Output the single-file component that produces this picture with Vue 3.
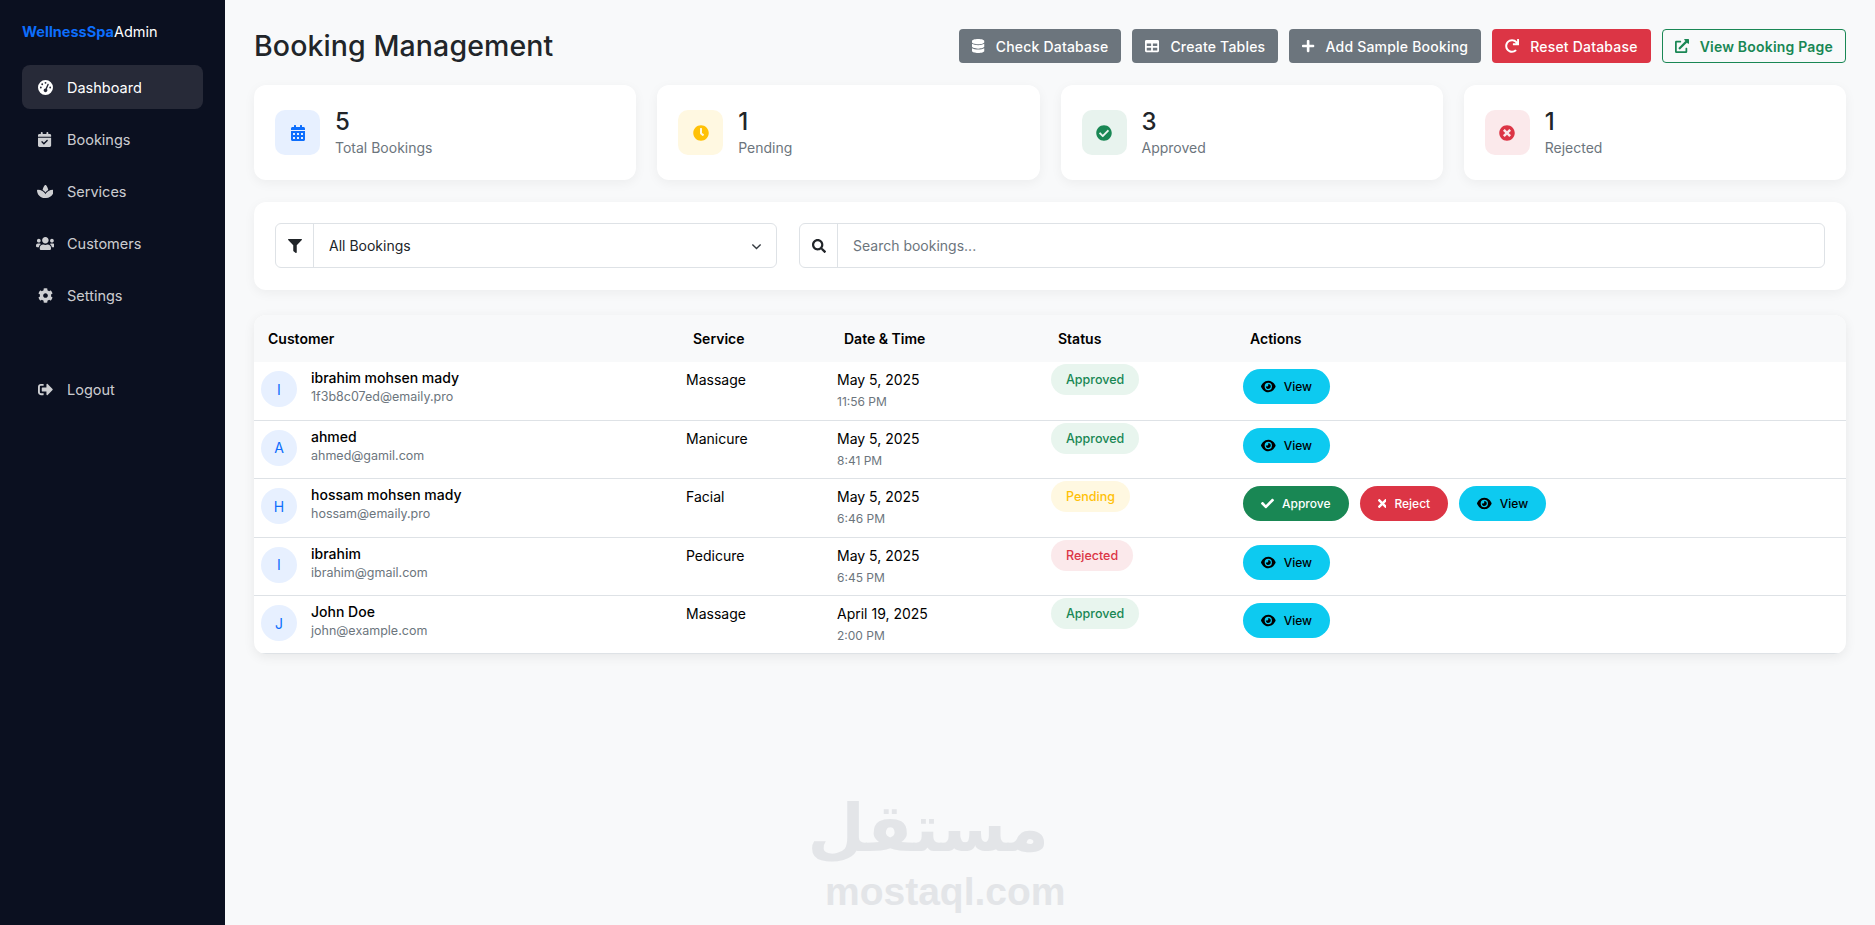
<template>
  <div class="layout">
    <aside class="sidebar">
      <div class="brand"><b>WellnessSpa</b>Admin</div>
      <nav class="nav">
        <a
          v-for="item in navItems"
          :key="item.label"
          class="nav-item"
          :class="{ active: item.active, logout: item.label === 'Logout' }"
        >
          <span class="nav-icon">
            <svg class="fa" :viewBox="icons[item.icon].box"><path :d="icons[item.icon].d" /></svg>
          </span>
          {{ item.label }}
        </a>
      </nav>
    </aside>

    <main class="main">
      <header class="page-head">
        <h1>Booking Management</h1>
        <div class="head-actions">
          <button v-for="b in headButtons" :key="b.label" class="head-btn" :class="b.kind">
            <svg class="fa" :viewBox="icons[b.icon].box"><path :d="icons[b.icon].d" /></svg>
            {{ b.label }}
          </button>
        </div>
      </header>

      <section class="stats">
        <div v-for="s in stats" :key="s.label" class="stat-card">
          <div class="stat-icon" :class="s.kind">
            <svg class="fa" :viewBox="icons[s.icon].box"><path :d="icons[s.icon].d" /></svg>
          </div>
          <div>
            <div class="stat-value">{{ s.value }}</div>
            <div class="stat-label">{{ s.label }}</div>
          </div>
        </div>
      </section>

      <section class="filters">
        <div class="input-group">
          <span class="addon"><svg class="fa" :viewBox="icons.filter.box"><path :d="icons.filter.d" /></svg></span>
          <select class="control">
            <option>All Bookings</option>
          </select>
          <svg class="chevron" viewBox="0 0 16 16"><path d="M2 5l6 6 6-6" /></svg>
        </div>
        <div class="input-group">
          <span class="addon"><svg class="fa" :viewBox="icons.search.box"><path :d="icons.search.d" /></svg></span>
          <input class="control" placeholder="Search bookings..." />
        </div>
      </section>

      <section class="table-card">
        <table>
          <colgroup>
            <col style="width: 425px" />
            <col style="width: 151px" />
            <col style="width: 214px" />
            <col style="width: 192px" />
            <col />
          </colgroup>
          <thead>
            <tr>
              <th>Customer</th>
              <th>Service</th>
              <th>Date &amp; Time</th>
              <th>Status</th>
              <th>Actions</th>
            </tr>
          </thead>
          <tbody>
            <tr v-for="r in bookings" :key="r.email">
              <td>
                <div class="customer">
                  <span class="avatar">{{ r.name[0].toUpperCase() }}</span>
                  <div>
                    <div class="name">{{ r.name }}</div>
                    <div class="email">{{ r.email }}</div>
                  </div>
                </div>
              </td>
              <td>{{ r.service }}</td>
              <td>
                {{ r.date }}
                <small class="time">{{ r.time }}</small>
              </td>
              <td><span class="pill" :class="r.status.toLowerCase()">{{ r.status }}</span></td>
              <td>
                <div class="row-actions">
                  <template v-if="r.status === 'Pending'">
                    <button class="row-btn approve">
                      <svg class="fa" :viewBox="icons.check.box"><path :d="icons.check.d" /></svg>
                      Approve
                    </button>
                    <button class="row-btn reject">
                      <svg class="fa" :viewBox="icons.times.box"><path :d="icons.times.d" /></svg>
                      Reject
                    </button>
                  </template>
                  <button class="row-btn view">
                    <svg class="fa" :viewBox="icons.eye.box"><path :d="icons.eye.d" /></svg>
                    View
                  </button>
                </div>
              </td>
            </tr>
          </tbody>
        </table>
      </section>
    </main>

    <div class="watermark">
      <div class="wm-ar" dir="rtl">مستقل</div>
      <div class="wm-en">mostaql.com</div>
    </div>
  </div>
</template>

<script setup>
const icons = {
  gauge: { box: '0 0 512 512', d: 'M0 256a256 256 0 1 1 512 0A256 256 0 1 1 0 256zM288 96a32 32 0 1 0 -64 0 32 32 0 1 0 64 0zM256 416c35.3 0 64-28.7 64-64c0-17.4-6.9-33.1-18.1-44.6L366 161.7c5.3-12.1-.2-26.3-12.3-31.6s-26.3 .2-31.6 12.3L257.9 288c-.6 0-1.3 0-1.9 0c-35.3 0-64 28.7-64 64s28.7 64 64 64zM176 144a32 32 0 1 0 -64 0 32 32 0 1 0 64 0zM96 288a32 32 0 1 0 0-64 32 32 0 1 0 0 64zm352-32a32 32 0 1 0 -64 0 32 32 0 1 0 64 0z' },
  calendarCheck: { box: '0 0 448 512', d: 'M128 0c17.7 0 32 14.3 32 32V64H288V32c0-17.7 14.3-32 32-32s32 14.3 32 32V64h48c26.5 0 48 21.5 48 48v48H0V112C0 85.5 21.5 64 48 64H96V32c0-17.7 14.3-32 32-32zM0 192H448V464c0 26.5-21.5 48-48 48H48c-26.5 0-48-21.5-48-48V192zM329 305c9.4-9.4 9.4-24.6 0-33.9s-24.6-9.4-33.9 0l-95 95-47-47c-9.4-9.4-24.6-9.4-33.9 0s-9.4 24.6 0 33.9l64 64c9.4 9.4 24.6 9.4 33.9 0L329 305z' },
  spa: { box: '0 0 576 512', d: 'M183.1 235.3c33.7 20.7 62.9 48.1 85.8 80.5c7 9.9 13.4 20.3 19.1 31c5.7-10.8 12.1-21.1 19.1-31c22.9-32.4 52.1-59.8 85.8-80.5C437.6 207.8 490.1 192 546 192h9.9c11.1 0 20.1 9 20.1 20.1C576 360.1 456.1 480 308.1 480H288 267.9C119.9 480 0 360.1 0 212.1C0 201 9 192 20.1 192H30c55.9 0 108.4 15.8 153.1 43.3zM301.5 37.6c15.7 16.9 61.1 71.8 84.4 164.6c-38 21.6-71.4 50.8-97.9 85.6c-26.5-34.8-59.9-63.9-97.9-85.6c23.2-92.8 68.6-147.7 84.4-164.6C278 33.9 282.9 32 288 32s10 1.9 13.5 5.6z' },
  users: { box: '0 0 640 512', d: 'M96 224c35.3 0 64-28.7 64-64s-28.7-64-64-64-64 28.7-64 64 28.7 64 64 64zm448 0c35.3 0 64-28.7 64-64s-28.7-64-64-64-64 28.7-64 64 28.7 64 64 64zm32 32h-64c-17.6 0-33.5 7.1-45.1 18.6 40.3 22.1 68.9 62 75.1 109.4h66c17.7 0 32-14.3 32-32v-32c0-35.3-28.7-64-64-64zm-256 0c61.9 0 112-50.1 112-112S381.9 32 320 32 208 82.1 208 144s50.1 112 112 112zm76.8 32h-8.3c-20.8 10-43.9 16-68.5 16s-47.6-6-68.5-16h-8.3C179.6 288 128 339.6 128 403.2V432c0 26.5 21.5 48 48 48h288c26.5 0 48-21.5 48-48v-28.8c0-63.6-51.6-115.2-115.2-115.2zm-223.7-13.4C161.5 263.1 145.6 256 128 256H64c-35.3 0-64 28.7-64 64v32c0 17.7 14.3 32 32 32h65.9c6.3-47.4 34.9-87.3 75.2-109.4z' },
  cog: { box: '0 0 512 512', d: 'M487.4 315.7l-42.6-24.6c4.3-23.2 4.3-47 0-70.2l42.6-24.6c4.9-2.8 7.1-8.6 5.5-14-11.1-35.6-30-67.8-54.7-94.6-3.8-4.1-10-5.1-14.8-2.3L380.8 110c-17.9-15.4-38.5-27.3-60.8-35.1V25.8c0-5.6-3.9-10.5-9.4-11.7-36.7-8.2-74.3-7.8-109.2 0-5.5 1.2-9.4 6.1-9.4 11.7V75c-22.2 7.9-42.8 19.8-60.8 35.1L88.7 85.5c-4.9-2.8-11-1.9-14.8 2.3-24.7 26.7-43.6 58.9-54.7 94.6-1.7 5.4.6 11.2 5.5 14L67.3 221c-4.3 23.2-4.3 47 0 70.2l-42.6 24.6c-4.9 2.8-7.1 8.6-5.5 14 11.1 35.6 30 67.8 54.7 94.6 3.8 4.1 10 5.1 14.8 2.3l42.6-24.6c17.9 15.4 38.5 27.3 60.8 35.1v49.2c0 5.6 3.9 10.5 9.4 11.7 36.7 8.2 74.3 7.8 109.2 0 5.5-1.2 9.4-6.1 9.4-11.7v-49.2c22.2-7.9 42.8-19.8 60.8-35.1l42.6 24.6c4.9 2.8 11 1.9 14.8-2.3 24.7-26.7 43.6-58.9 54.7-94.6 1.5-5.5-.7-11.3-5.6-14.1zM256 336c-44.1 0-80-35.9-80-80s35.9-80 80-80 80 35.9 80 80-35.9 80-80 80z' },
  signOut: { box: '0 0 512 512', d: 'M497 273L329 441c-15 15-41 4.5-41-17v-96H152c-13.3 0-24-10.7-24-24v-96c0-13.3 10.7-24 24-24h136V88c0-21.4 25.9-32 41-17l168 168c9.3 9.4 9.3 24.6 0 34zM192 436v-40c0-6.6-5.4-12-12-12H96c-17.7 0-32-14.3-32-32V160c0-17.7 14.3-32 32-32h84c6.6 0 12-5.4 12-12V76c0-6.6-5.4-12-12-12H96c-53 0-96 43-96 96v192c0 53 43 96 96 96h84c6.6 0 12-5.4 12-12z' },
  database: { box: '0 0 448 512', d: 'M448 73.143v45.714C448 159.143 347.667 192 224 192S0 159.143 0 118.857V73.143C0 32.857 100.333 0 224 0s224 32.857 224 73.143zM448 176v102.857C448 319.143 347.667 352 224 352S0 319.143 0 278.857V176c48.125 33.143 136.208 48.572 224 48.572S399.874 209.143 448 176zm0 160v102.857C448 479.143 347.667 512 224 512S0 479.143 0 438.857V336c48.125 33.143 136.208 48.572 224 48.572S399.874 369.143 448 336z' },
  table: { box: '0 0 512 512', d: 'M464 32H48C21.49 32 0 53.49 0 80v352c0 26.51 21.49 48 48 48h416c26.51 0 48-21.49 48-48V80c0-26.51-21.49-48-48-48zM224 416H64v-96h160v96zm0-160H64v-96h160v96zm224 160H288v-96h160v96zm0-160H288v-96h160v96z' },
  plus: { box: '0 0 448 512', d: 'M416 208H272V64c0-17.67-14.33-32-32-32h-32c-17.67 0-32 14.33-32 32v144H32c-17.67 0-32 14.33-32 32v32c0 17.67 14.33 32 32 32h144v144c0 17.67 14.33 32 32 32h32c17.67 0 32-14.33 32-32V304h144c17.67 0 32-14.33 32-32v-32c0-17.67-14.33-32-32-32z' },
  redo: { box: '0 0 512 512', d: 'M500.33 0h-47.41a12 12 0 0 0-12 12.57l4 82.76A247.42 247.42 0 0 0 256 8C119.34 8 7.9 119.53 8 256.19 8.1 393.07 119.1 504 256 504a247.1 247.1 0 0 0 166.18-63.91 12 12 0 0 0 .48-17.43l-34-34a12 12 0 0 0-16.38-.55A176 176 0 1 1 402.1 157.8l-101.53-4.87a12 12 0 0 0-12.57 12v47.41a12 12 0 0 0 12 12h200.33a12 12 0 0 0 12-12V12a12 12 0 0 0-12-12z' },
  external: { box: '0 0 512 512', d: 'M432,320H400a16,16,0,0,0-16,16V448H64V128H208a16,16,0,0,0,16-16V80a16,16,0,0,0-16-16H48A48,48,0,0,0,0,112V464a48,48,0,0,0,48,48H400a48,48,0,0,0,48-48V336A16,16,0,0,0,432,320ZM488,0h-128c-21.37,0-32.05,25.91-17,41l35.73,35.73L135,320.37a24,24,0,0,0,0,34L157.67,377a24,24,0,0,0,34,0L435.28,133.32,471,169c15,15,41,4.5,41-17V24A24,24,0,0,0,488,0Z' },
  calendar: { box: '0 0 448 512', d: 'M0 464c0 26.5 21.5 48 48 48h352c26.5 0 48-21.5 48-48V192H0v272zm320-196c0-6.6 5.4-12 12-12h40c6.6 0 12 5.4 12 12v40c0 6.6-5.4 12-12 12h-40c-6.6 0-12-5.4-12-12v-40zm0 128c0-6.6 5.4-12 12-12h40c6.6 0 12 5.4 12 12v40c0 6.6-5.4 12-12 12h-40c-6.6 0-12-5.4-12-12v-40zM192 268c0-6.6 5.4-12 12-12h40c6.6 0 12 5.4 12 12v40c0 6.6-5.4 12-12 12h-40c-6.6 0-12-5.4-12-12v-40zm0 128c0-6.6 5.4-12 12-12h40c6.6 0 12 5.4 12 12v40c0 6.6-5.4 12-12 12h-40c-6.6 0-12-5.4-12-12v-40zM64 268c0-6.6 5.4-12 12-12h40c6.6 0 12 5.4 12 12v40c0 6.6-5.4 12-12 12H76c-6.6 0-12-5.4-12-12v-40zm0 128c0-6.6 5.4-12 12-12h40c6.6 0 12 5.4 12 12v40c0 6.6-5.4 12-12 12H76c-6.6 0-12-5.4-12-12v-40zM400 64h-48V16c0-8.8-7.2-16-16-16h-32c-8.8 0-16 7.2-16 16v48H160V16c0-8.8-7.2-16-16-16h-32c-8.8 0-16 7.2-16 16v48H48C21.5 64 0 85.5 0 112v48h448v-48c0-26.5-21.5-48-48-48z' },
  clock: { box: '0 0 512 512', d: 'M256,8C119,8,8,119,8,256S119,504,256,504,504,393,504,256,393,8,256,8Zm92.49,313h0l-20,25a16,16,0,0,1-22.49,2.5h0l-67-49.72a40,40,0,0,1-15-31.23V112a16,16,0,0,1,16-16h32a16,16,0,0,1,16,16V256l58,42.5A16,16,0,0,1,348.49,321Z' },
  checkCircle: { box: '0 0 512 512', d: 'M504 256c0 136.967-111.033 248-248 248S8 392.967 8 256 119.033 8 256 8s248 111.033 248 248zM227.314 387.314l184-184c6.248-6.248 6.248-16.379 0-22.627l-22.627-22.627c-6.248-6.249-16.379-6.249-22.628 0L216 308.118l-70.059-70.059c-6.248-6.248-16.379-6.248-22.628 0l-22.627 22.627c-6.248 6.248-6.248 16.379 0 22.627l104 104c6.249 6.249 16.379 6.249 22.628.001z' },
  timesCircle: { box: '0 0 512 512', d: 'M256 8C119 8 8 119 8 256s111 248 248 248 248-111 248-248S393 8 256 8zm121.6 313.1c4.7 4.7 4.7 12.3 0 17L338 377.6c-4.7 4.7-12.3 4.7-17 0L256 312l-65.1 65.6c-4.7 4.7-12.3 4.7-17 0L134.4 338c-4.7-4.7-4.7-12.3 0-17l65.6-65-65.6-65.1c-4.7-4.7-4.7-12.3 0-17l39.6-39.6c4.7-4.7 12.3-4.7 17 0l65 65.7 65.1-65.6c4.7-4.7 12.3-4.7 17 0l39.6 39.6c4.7 4.7 4.7 12.3 0 17L312 256l65.6 65.1z' },
  filter: { box: '0 0 512 512', d: 'M487.976 0H24.028C2.71 0-8.047 25.866 7.058 40.971L192 225.941V432c0 7.831 3.821 15.17 10.237 19.662l80 55.98C298.02 518.69 320 507.493 320 487.98V225.941l184.947-184.97C520.021 25.896 509.338 0 487.976 0z' },
  search: { box: '0 0 512 512', d: 'M505 442.7L405.3 343c-4.5-4.5-10.6-7-17-7H372c27.6-35.3 44-79.7 44-128C416 93.1 322.9 0 208 0S0 93.1 0 208s93.1 208 208 208c48.3 0 92.7-16.4 128-44v16.3c0 6.4 2.5 12.5 7 17l99.7 99.7c9.4 9.4 24.6 9.4 33.9 0l28.3-28.3c9.4-9.4 9.4-24.6.1-34zM208 336c-70.7 0-128-57.2-128-128 0-70.7 57.2-128 128-128 70.7 0 128 57.2 128 128 0 70.7-57.2 128-128 128z' },
  check: { box: '0 0 512 512', d: 'M173.898 439.404l-166.4-166.4c-9.997-9.997-9.997-26.206 0-36.204l36.203-36.204c9.997-9.998 26.207-9.998 36.204 0L192 312.69 432.095 72.596c9.997-9.997 26.207-9.997 36.204 0l36.203 36.204c9.997 9.997 9.997 26.206 0 36.204l-294.4 294.401c-9.998 9.997-26.207 9.997-36.204-.001z' },
  times: { box: '0 0 352 512', d: 'M242.72 256l100.07-100.07c12.28-12.28 12.28-32.19 0-44.48l-22.24-22.24c-12.28-12.28-32.19-12.28-44.48 0L176 189.28 75.93 89.21c-12.28-12.28-32.19-12.28-44.48 0L9.21 111.45c-12.28 12.28-12.28 32.19 0 44.48L109.28 256 9.21 356.07c-12.28 12.28-12.28 32.19 0 44.48l22.24 22.24c12.28 12.28 32.2 12.28 44.48 0L176 322.72l100.07 100.07c12.28 12.28 32.2 12.28 44.48 0l22.24-22.24c12.28-12.28 12.28-32.19 0-44.48L242.72 256z' },
  eye: { box: '0 0 576 512', d: 'M288 32c-80.8 0-145.5 36.8-192.6 80.6C48.6 156 17.3 208 2.5 243.7c-3.3 7.9-3.3 16.7 0 24.6C17.3 304 48.6 356 95.4 399.4C142.5 443.2 207.2 480 288 480s145.5-36.8 192.6-80.6c46.8-43.5 78.1-95.4 93-131.1c3.3-7.9 3.3-16.7 0-24.6c-14.9-35.7-46.2-87.7-93-131.1C433.5 68.8 368.8 32 288 32zM144 256a144 144 0 1 1 288 0 144 144 0 1 1 -288 0zm144-64c0 35.3-28.7 64-64 64c-7.1 0-13.9-1.2-20.3-3.3c-5.5-1.8-11.9 1.6-11.7 7.4c.3 6.9 1.3 13.8 3.2 20.7c13.7 51.2 66.4 81.6 117.6 67.9s81.6-66.4 67.9-117.6c-11.1-41.5-47.8-69.4-88.6-71.1c-5.8-.2-9.2 6.1-7.4 11.7c2.1 6.4 3.3 13.2 3.3 20.3z' }
}

const navItems = [
  { label: 'Dashboard', icon: 'gauge', active: true },
  { label: 'Bookings', icon: 'calendarCheck' },
  { label: 'Services', icon: 'spa' },
  { label: 'Customers', icon: 'users' },
  { label: 'Settings', icon: 'cog' },
  { label: 'Logout', icon: 'signOut' }
]

const headButtons = [
  { label: 'Check Database', icon: 'database', kind: 'grey' },
  { label: 'Create Tables', icon: 'table', kind: 'grey' },
  { label: 'Add Sample Booking', icon: 'plus', kind: 'grey' },
  { label: 'Reset Database', icon: 'redo', kind: 'red' },
  { label: 'View Booking Page', icon: 'external', kind: 'outline' }
]

const stats = [
  { value: 5, label: 'Total Bookings', icon: 'calendar', kind: 'blue' },
  { value: 1, label: 'Pending', icon: 'clock', kind: 'yellow' },
  { value: 3, label: 'Approved', icon: 'checkCircle', kind: 'green' },
  { value: 1, label: 'Rejected', icon: 'timesCircle', kind: 'red' }
]

const bookings = [
  { name: 'ibrahim mohsen mady', email: '1f3b8c07ed@emaily.pro', service: 'Massage', date: 'May 5, 2025', time: '11:56 PM', status: 'Approved' },
  { name: 'ahmed', email: 'ahmed@gamil.com', service: 'Manicure', date: 'May 5, 2025', time: '8:41 PM', status: 'Approved' },
  { name: 'hossam mohsen mady', email: 'hossam@emaily.pro', service: 'Facial', date: 'May 5, 2025', time: '6:46 PM', status: 'Pending' },
  { name: 'ibrahim', email: 'ibrahim@gmail.com', service: 'Pedicure', date: 'May 5, 2025', time: '6:45 PM', status: 'Rejected' },
  { name: 'John Doe', email: 'john@example.com', service: 'Massage', date: 'April 19, 2025', time: '2:00 PM', status: 'Approved' }
]
</script>

<style>
body {
  background: #f8f9fa;
}
</style>

<style scoped>
.layout {
  display: flex;
  min-height: 925px;
  position: relative;
  overflow: hidden;
  font-family: Inter, "Noto Sans", sans-serif;
  font-size: 14px;
  line-height: 21px;
  color: #000;
  background: #f8f9fa;
}

.fa {
  display: block;
  height: 14px;
  width: auto;
  fill: currentColor;
  flex: none;
}

/* sidebar */
.sidebar {
  width: 225px;
  flex: none;
  box-sizing: border-box;
  background: #0b1020;
  padding: 20px 22px;
  color: #fff;
}

.brand {
  font-size: 14.5px;
  line-height: 24px;
  margin-bottom: 21px;
}

.brand b {
  color: #0d6efd;
  font-weight: 700;
}

.nav-item {
  display: flex;
  align-items: center;
  gap: 13px;
  height: 44px;
  padding-left: 14px;
  margin-bottom: 8px;
  border-radius: 8px;
  color: rgba(255, 255, 255, 0.8);
  font-size: 14.5px;
}

.nav-item.active {
  background: #272a38;
  color: #fff;
}

.nav-item.logout {
  margin-top: 50px;
}

.nav-icon {
  width: 18px;
  display: flex;
  justify-content: center;
}

.nav-icon .fa {
  height: 15px;
}

/* page head */
.main {
  flex: 1;
  min-width: 0;
  padding: 29px 29px 0;
}

.page-head {
  display: flex;
  justify-content: space-between;
  align-items: center;
  margin-bottom: 22px;
}

h1 {
  margin: 0;
  font-size: 28.5px;
  line-height: 34px;
  font-weight: 500;
  color: #212529;
  letter-spacing: 0.1px;
}

.head-actions {
  display: flex;
  gap: 11px;
}

.head-btn {
  display: flex;
  align-items: center;
  gap: 11px;
  height: 34px;
  box-sizing: border-box;
  padding: 0 12px;
  border: 1px solid transparent;
  border-radius: 4px;
  font: 500 14px Inter, sans-serif;
  letter-spacing: 0.2px;
  color: #fff;
}

.head-btn.grey { background: #6c757d; }
.head-btn.red { background: #dc3545; }
.head-btn.outline {
  background: transparent;
  border-color: #198754;
  color: #198754;
  font-weight: 600;
}

/* stats */
.stats {
  display: grid;
  grid-template-columns: repeat(4, 1fr);
  gap: 21px;
  margin-bottom: 22px;
}

.stat-card {
  display: flex;
  align-items: center;
  gap: 15px;
  height: 95px;
  box-sizing: border-box;
  padding: 0 21px;
  background: #fff;
  border-radius: 12px;
  box-shadow: 0 3px 12px rgba(0, 0, 0, 0.05);
}

.stat-icon {
  width: 45px;
  height: 45px;
  border-radius: 10px;
  display: flex;
  align-items: center;
  justify-content: center;
}

.stat-icon .fa { height: 16px; }
.stat-icon.blue { background: #e7f0ff; color: #0d6efd; }
.stat-icon.yellow { background: #fff8e1; color: #ffc107; }
.stat-icon.green { background: #e8f3ee; color: #198754; }
.stat-icon.red { background: #fbe9eb; color: #dc3545; }

.stat-value {
  font-size: 24px;
  line-height: 30px;
  font-weight: 500;
  color: #212529;
}

.stat-label {
  color: #6c757d;
  font-size: 14px;
  line-height: 21px;
}

/* filters */
.filters {
  display: grid;
  grid-template-columns: 502px 1fr;
  gap: 22px;
  height: 88px;
  box-sizing: border-box;
  padding: 21px;
  align-items: start;
  background: #fff;
  border-radius: 12px;
  box-shadow: 0 3px 12px rgba(0, 0, 0, 0.05);
  margin-bottom: 25px;
}

.input-group {
  display: flex;
  position: relative;
  height: 45px;
  box-sizing: border-box;
  border: 1px solid #dee2e6;
  border-radius: 6px;
}

.addon {
  width: 37px;
  flex: none;
  display: flex;
  align-items: center;
  justify-content: center;
  border-right: 1px solid #dee2e6;
  color: #212529;
}

.control {
  flex: 1;
  min-width: 0;
  border: 0;
  outline: 0;
  appearance: none;
  background: transparent;
  padding: 0 15px;
  font: 14px Inter, sans-serif;
  color: #212529;
}

.control::placeholder {
  color: #6c757d;
  opacity: 1;
}

.chevron {
  position: absolute;
  right: 14px;
  top: 17px;
  width: 11px;
  height: 11px;
  fill: none;
  stroke: #343a40;
  stroke-width: 2;
}

/* table */
.table-card {
  background: #fff;
  border-radius: 12px;
  overflow: hidden;
  box-shadow: 0 3px 12px rgba(0, 0, 0, 0.07);
}

table {
  width: 100%;
  border-collapse: collapse;
  table-layout: fixed;
}

th {
  height: 47px;
  padding: 0 14px;
  text-align: left;
  background: #f8f9fa;
  font-size: 14px;
  font-weight: 600;
}

td {
  height: 58.4px;
  box-sizing: border-box;
  padding: 7px;
  vertical-align: top;
  border-bottom: 1px solid #dee2e6;
}

.customer {
  display: flex;
  gap: 14px;
  margin-top: -2px;
}

.avatar {
  width: 36px;
  height: 36px;
  margin-top: 4px;
  flex: none;
  border-radius: 50%;
  background: #e7f0ff;
  color: #0d6efd;
  display: flex;
  align-items: center;
  justify-content: center;
  font-size: 14px;
}

.name {
  font-weight: 500;
}

.email {
  font-size: 12.5px;
  line-height: 18px;
  color: #6c757d;
}

.time {
  display: block;
  margin-top: 3px;
  font-size: 12px;
  line-height: 18px;
  color: #6c757d;
}

.pill {
  display: inline-block;
  margin-top: -5px;
  height: 31px;
  line-height: 31px;
  padding: 0 15px;
  border-radius: 16px;
  font-size: 12.5px;
  font-weight: 500;
  vertical-align: top;
}

.pill.approved { background: #e8f5ee; color: #198754; }
.pill.pending { background: #fff8e1; color: #ffc107; }
.pill.rejected { background: #fbe9eb; color: #dc3545; }

.row-actions {
  display: flex;
  gap: 11px;
}

.row-btn {
  display: flex;
  align-items: center;
  gap: 8px;
  height: 35px;
  padding: 0 18px;
  border: 0;
  border-radius: 18px;
  font: 500 12px Inter, sans-serif;
}

.row-btn .fa { height: 13px; }
.row-btn.view { background: #0dcaf0; color: #000; }
.row-btn.approve { background: #198754; color: #fff; }
.row-btn.reject { background: #dc3545; color: #fff; }

/* watermark sits over the page */
.watermark {
  position: absolute;
  left: 825px;
  top: 786px;
  width: 224px;
  text-align: center;
  color: #e3e5e8;
  pointer-events: none;
}

.wm-ar {
  font: 700 66px/86px "DejaVu Sans", sans-serif;
}

.wm-en {
  font: 700 39px/40px "Liberation Sans", sans-serif;
  white-space: nowrap;
}
</style>
